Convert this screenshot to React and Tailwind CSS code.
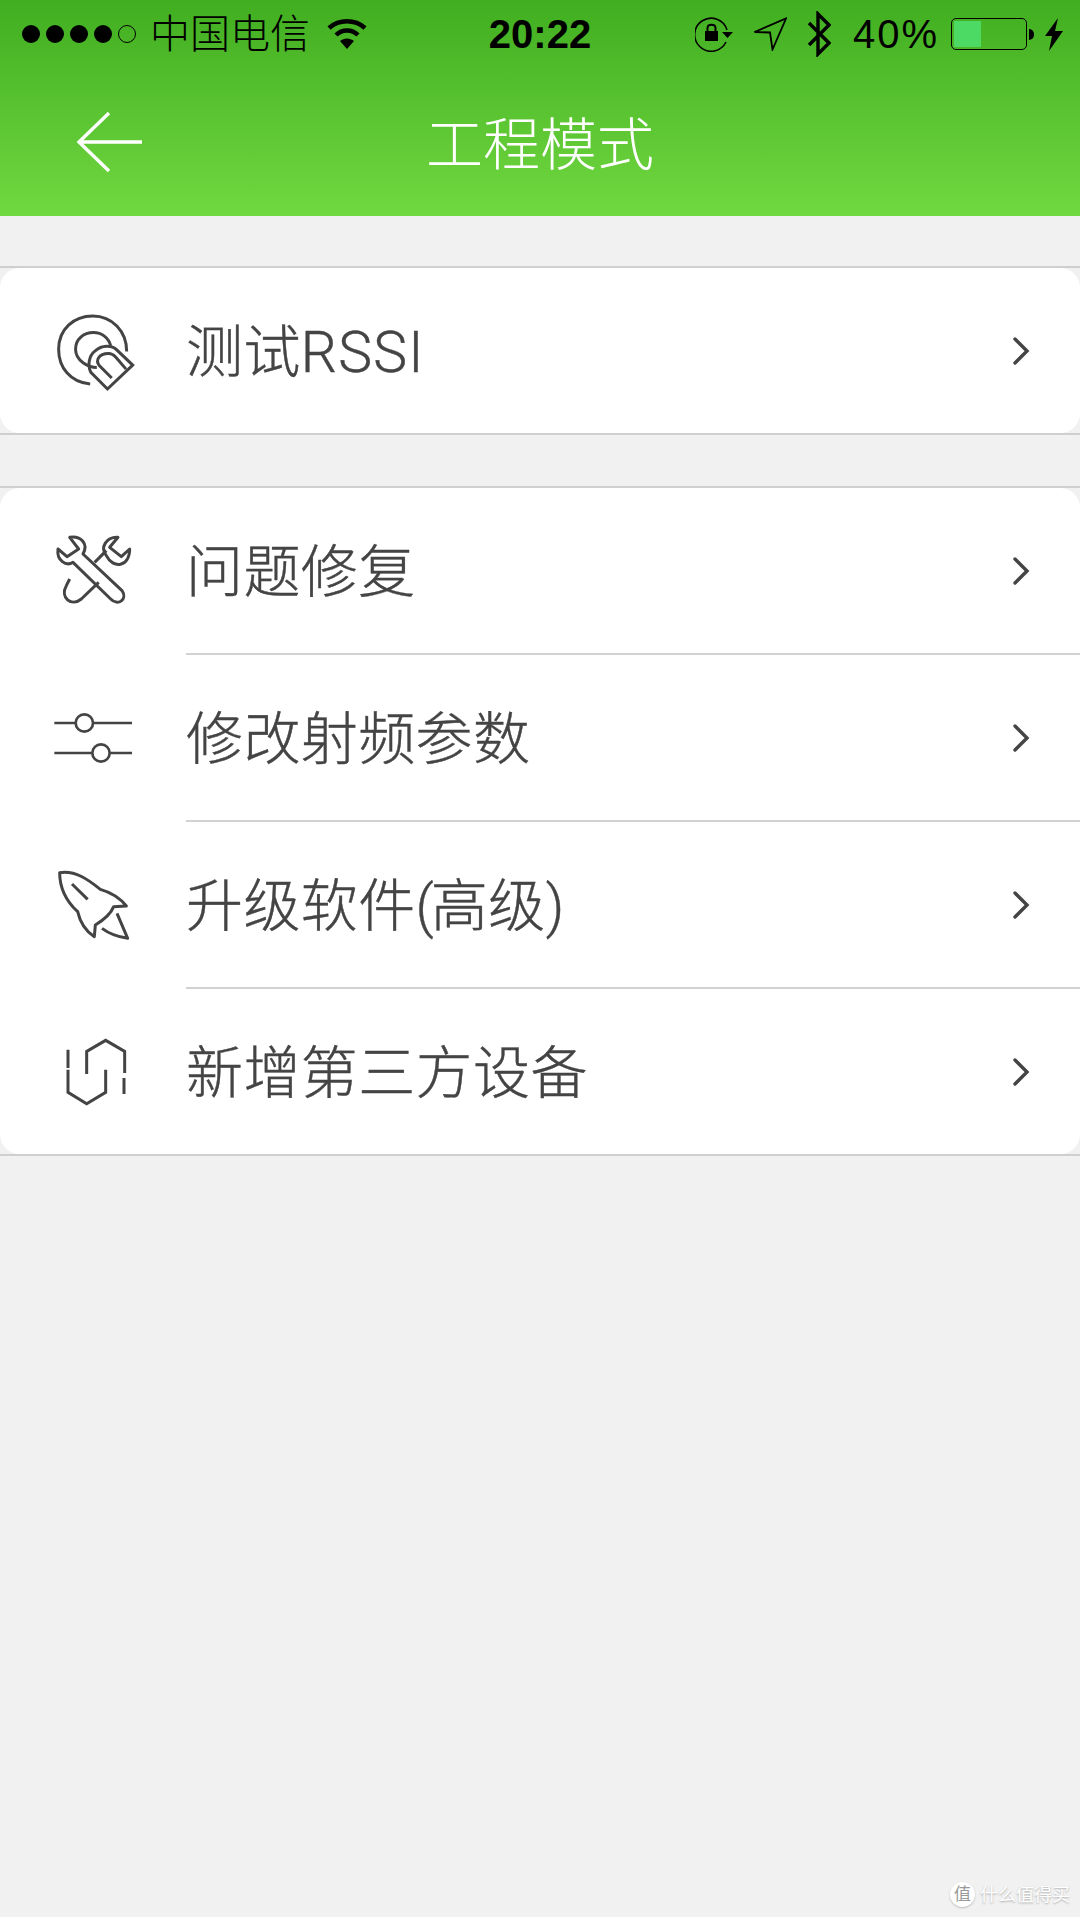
import React from "react";

const cjk = "font-['Liberation_Sans','Noto_Sans_CJK_SC',sans-serif]";

function Dots() {
    return (
        <div className="ml-[6px] flex items-center gap-[6px]">
            <span className="w-[18px] h-[18px] rounded-full bg-black" />
            <span className="w-[18px] h-[18px] rounded-full bg-black" />
            <span className="w-[18px] h-[18px] rounded-full bg-black" />
            <span className="w-[18px] h-[18px] rounded-full bg-black" />
            <span className="w-[18px] h-[18px] rounded-full border-[1.5px] border-black" />
        </div>
    );
}

function Wifi() {
    return (
        <svg width="40" height="32" viewBox="0 0 40 32" fill="none" stroke="#000" strokeWidth="4.5">
            <path d="M2 10C12 1 28 1 38 10" />
            <path d="M9 17C15 11 25 11 31 17" />
            <path d="M13 23L20 31L27 23C23 19.5 17 19.5 13 23Z" fill="#000" stroke="none" />
        </svg>
    );
}

function RotationLock() {
    return (
        <svg width="38" height="36" viewBox="0 0 38 36" fill="none" stroke="#000" strokeWidth="1.6">
            <path d="M32 14A16.5 16.5 0 1 0 31 26" />
            <path d="M27 16H38L32.5 22Z" fill="#000" stroke="none" />
            <rect x="10" y="15" width="13" height="10" fill="#000" stroke="none" />
            <path d="M12.5 15V12C12.5 7.5 20.5 7.5 20.5 12V15" strokeWidth="2" />
        </svg>
    );
}

function Location() {
    return (
        <svg width="34" height="34" viewBox="0 0 34 34" fill="none" stroke="#000" strokeWidth="1.8">
            <path d="M1.5 15L33 1.5L19.5 32.5L17 15.5Z" strokeLinejoin="miter" />
        </svg>
    );
}

function Bluetooth() {
    return (
        <svg width="24" height="46" viewBox="0 0 24 46" fill="none" stroke="#000" strokeWidth="3.4">
            <path d="M2 12L22 32L11 43V3L22 14L2 34" />
        </svg>
    );
}

function Bolt() {
    return (
        <svg width="20" height="33" viewBox="0 0 20 33">
            <path d="M14 0L1 18H8L5 33L19 13H11Z" fill="#000" />
        </svg>
    );
}

function Battery() {
    return (
        <div className="flex items-center gap-[2px]">
            <div className="w-[76px] h-[32px] rounded-[5px] border-[1.5px] border-black p-[2px]">
                <div className="w-[27px] h-full bg-[#4cd964]" />
            </div>
            <div className="w-[5px] h-[11px] rounded-r-full bg-black" />
        </div>
    );
}

function TestIcon() {
    return (
        <svg className="mt-[4px]" width="87" height="83" viewBox="150 170 260 250" fill="none" stroke="#444" strokeWidth="9">
            <path d="M270 390C210 385 175 340 175 285C175 225 220 185 278 185C335 185 380 230 380 292" />
            <path d="M290 340C265 340 226 320 226 285C226 255 250 235 280 235C305 235 325 250 332 275" />
            <path d="M398 333L322 405L272 355C262 335 265 305 285 290C305 272 335 272 350 287Z" />
            <path d="M335 372L298 335C285 320 295 298 325 298C335 298 342 303 348 310L378 345" />
        </svg>
    );
}

function RepairIcon() {
    return (
        <svg width="80" height="76" viewBox="155 840 240 228" fill="none" stroke="#444" strokeWidth="9" strokeLinejoin="round">
            <path d="M205 850C240 845 262 870 245 900L362 1010C380 1035 350 1058 328 1035L215 925C195 938 165 920 170 885L197 908L232 885Z" />
            <path d="M350 850C315 848 295 880 315 905C335 945 385 940 385 885L360 908L325 880Z" />
            <path d="M205 975L195 995C175 1030 210 1060 240 1035L292 985M280 925L315 890" />
        </svg>
    );
}

function SlidersIcon() {
    return (
        <svg className="mr-[2px]" width="80" height="56" viewBox="155 90 240 168" fill="none" stroke="#444">
            <path d="M162 126H395M162 216H395" strokeWidth="8" />
            <circle cx="252" cy="126" r="26" fill="#fff" strokeWidth="8" />
            <circle cx="302" cy="216" r="26" fill="#fff" strokeWidth="8" />
        </svg>
    );
}

function RocketIcon() {
    return (
        <svg className="ml-[2px]" width="74" height="72" viewBox="170 570 222 216" fill="none" stroke="#444" strokeWidth="9" strokeLinejoin="round">
            <path d="M178 578C225 570 265 600 300 628C335 638 360 655 378 678L340 680C330 705 310 720 285 735L282 770C258 755 240 730 232 695C205 670 178 630 178 578Z" />
            <path d="M215 612L262 658" />
            <path d="M350 700L382 775C350 770 325 760 305 745" />
        </svg>
    );
}

function HexIcon() {
    return (
        <svg className="ml-[7px]" width="66" height="68" viewBox="190 1075 198 204" fill="none" stroke="#444" strokeWidth="9">
            <path d="M202 1110V1165M202 1170V1238L258 1272L315 1238V1170" />
            <path d="M258 1183V1115L315 1082L372 1115V1180M370 1195V1243" />
        </svg>
    );
}

function Chevron() {
    return (
        <svg className="mb-[2px]" width="18" height="30" viewBox="0 0 18 30" fill="none" stroke="#444" strokeWidth="3.4" strokeLinecap="round">
            <path d="M3 3L15 15L3 27" />
        </svg>
    );
}

const group2 = [
    { id: "fix", label: "问题修复", icon: <RepairIcon /> },
    { id: "rf", label: "修改射频参数", icon: <SlidersIcon /> },
    {
        id: "upgrade",
        label: <>升级软件<span className="tracking-[-3px]">(</span>高级<span className="tracking-[-3px]">)</span></>,
        icon: <RocketIcon />,
    },
    { id: "add", label: "新增第三方设备", icon: <HexIcon /> },
];

function Row({ icon, label, divider }) {
    return (
        <div className={`flex ${divider ? "h-[167px]" : "h-[165px]"}`}>
            <div className="w-[186px] flex items-center justify-center shrink-0">{icon}</div>
            <div className={`flex-1 flex items-center justify-between pr-[50px] pt-[3px] ${divider ? "border-b-2 border-[#d2d2d2]" : ""}`}>
                <span className="text-[57px] tracking-[0.4px] font-light leading-none text-[#444] [-webkit-text-stroke:0.4px_#444] font-['Roboto','Noto_Sans_CJK_SC',sans-serif]">{label}</span>
                <Chevron />
            </div>
        </div>
    );
}

function Card({ children }) {
    return (
        <div className="border-y-2 border-[#cfcfcf]">
            <div className="bg-white rounded-[20px]">{children}</div>
        </div>
    );
}

export default function App() {
    return (
        <div className={`relative w-[1080px] h-[1917px] bg-[#f1f1f1] overflow-hidden ${cjk}`}>
            <header className="h-[216px] bg-gradient-to-b from-[#40ae20] to-[#70d840]">
                <div className="h-[68px] grid grid-cols-[1fr_auto_1fr] items-center px-[16px] text-black">
                    <div className="flex items-center">
                        <Dots />
                        <span className="ml-[14px] text-[40px] font-light leading-none">中国电信</span>
                        <span className="ml-[17px]"><Wifi /></span>
                    </div>
                    <span className="text-[40px] font-bold leading-none">20:22</span>
                    <div className="flex items-center justify-end">
                        <RotationLock />
                        <span className="ml-[20px]"><Location /></span>
                        <span className="ml-[20px]"><Bluetooth /></span>
                        <span className="ml-[22px] text-[40px] leading-none tracking-[2px]">40%</span>
                        <span className="ml-[12px]"><Battery /></span>
                        <span className="ml-[10px]"><Bolt /></span>
                    </div>
                </div>
                <div className="h-[148px] grid grid-cols-[1fr_auto_1fr] items-center">
                    <svg className="ml-[76px]" width="68" height="62" viewBox="0 0 68 62" fill="none" stroke="#fff" strokeWidth="3.4">
                        <path d="M33 2L3 31L33 60M3 31H66" />
                    </svg>
                    <h1 className="mt-[6px] text-[57px] font-light leading-none text-white">工程模式</h1>
                    <span />
                </div>
            </header>

            <div className="mt-[50px]">
                <Card>
                    <Row icon={<TestIcon />} label={<>测试<span className="tracking-[1.2px]">RSSI</span></>} />
                </Card>
            </div>
            <div className="mt-[51px]">
                <Card>
                    {group2.map((r, i) => (
                        <Row key={r.id} icon={r.icon} label={r.label} divider={i < group2.length - 1} />
                    ))}
                </Card>
            </div>

            <div className="absolute right-[10px] bottom-[10px] flex items-center gap-[5px] text-white [text-shadow:0_1px_2px_#aaa]">
                <span className="w-[25px] h-[25px] rounded-full bg-white shadow-[0_1px_2px_#bbb] text-[#999] [text-shadow:none] text-[17px] leading-[25px] text-center">值</span>
                <span className="text-[18px] leading-none">什么值得买</span>
            </div>
        </div>
    );
}
